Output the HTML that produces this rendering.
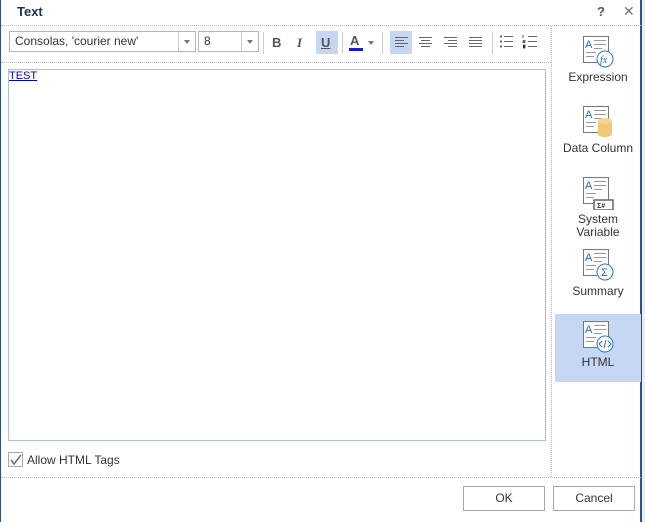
<!DOCTYPE html>
<html><head><style>
body{margin:0;width:645px;height:522px;overflow:hidden;background:#e9edf2;font-family:"Liberation Sans",sans-serif;font-size:12px;color:#333;position:relative}
.dlg{position:absolute;left:0;top:0;width:642px;height:522px;background:#fff;border-left:1px solid #2b4f8f;border-right:2px solid #2b4f8f;box-sizing:border-box}
.a{position:absolute}
.title{left:16px;top:4px;font-weight:bold;font-size:13px;color:#1e3261}
.dot{border-top:1px dotted #b8b8b8}
.vdot{border-left:1px dotted #b8b8b8}
.combo{border:1px solid #b5b5b5;height:21px;box-sizing:border-box;background:#fff;font-size:12px;line-height:19px;padding-left:5px;color:#333}
.combo .arr{position:absolute;right:0;top:0;width:16px;height:19px;border-left:1px solid #ccc}
.combo .arr:after{content:"";position:absolute;left:5px;top:8px;border:3px solid transparent;border-top:4px solid #777}
.sep{width:1px;height:22px;background:#ccc;top:32px}
.hl{background:#c5d7f2}
.btn{border:1px solid #a8a8a8;height:25px;box-sizing:border-box;text-align:center;line-height:23px;font-size:12px;color:#333}
.lab{width:86px;text-align:center;left:554px;font-size:12px;color:#333;line-height:13px}
</style></head><body>
<div class="dlg">
<div class="a title">Text</div>
<div class="a" style="left:596px;top:4px;font-weight:bold;font-size:13px;color:#555">?</div>
<div class="a" style="left:622px;top:3px;font-size:14px;color:#777">✕</div>
<div class="a dot" style="left:0;top:25px;width:640px"></div>
<div class="a vdot" style="left:550px;top:26px;height:451px"></div>
<div class="a combo" style="left:8px;top:31px;width:187px">Consolas, 'courier new'<div class="arr"></div></div>
<div class="a combo" style="left:197px;top:31px;width:61px">8<div class="arr"></div></div>
<div class="a sep" style="left:262px"></div>
<div class="a" style="left:271px;top:35px;font-weight:bold;font-size:13px;color:#555">B</div>
<div class="a" style="left:296px;top:35px;font-style:italic;font-weight:bold;font-size:13px;color:#555;font-family:'Liberation Serif',serif">I</div>
<div class="a hl" style="left:315px;top:31px;width:22px;height:23px"></div>
<div class="a" style="left:320px;top:35px;font-weight:bold;font-size:13px;color:#555;text-decoration:underline">U</div>
<div class="a sep" style="left:341px"></div>
<div class="a" style="left:349px;top:33px;font-weight:bold;font-size:13px;color:#555">A</div>
<div class="a" style="left:348px;top:48px;width:14px;height:3px;background:#1a1acc"></div>
<div class="a" style="left:367px;top:41px;border:3px solid transparent;border-top:4px solid #777"></div>
<div class="a sep" style="left:381px"></div>
<div class="a hl" style="left:389px;top:31px;width:22px;height:23px"></div>
<svg class="a" style="left:392px;top:35px" width="100" height="16" stroke="#666" stroke-width="1">
<path d="M2 2.5h13M2 5.5h9M2 8.5h13M2 11.5h9"/>
<path d="M26 2.5h13M28 5.5h9M26 8.5h13M28 11.5h9"/>
<path d="M51 2.5h13M55 5.5h9M51 8.5h13M55 11.5h9"/>
<path d="M76 2.5h13M76 5.5h13M76 8.5h13M76 11.5h13"/>
</svg>
<div class="a sep" style="left:491px"></div>
<svg class="a" style="left:498px;top:34px" width="45" height="16" stroke="#666" stroke-width="1">
<path d="M1 2.5h2M1 7.5h2M1 12.5h2" stroke-width="2"/>
<path d="M5 2.5h9M5 7.5h9M5 12.5h9"/>
<path d="M24 1v3M24 6.5h2v1h-2v1h2M24 11h2v3h-2" stroke-width="1"/>
<path d="M29 2.5h9M29 7.5h9M29 12.5h9"/>
</svg>
<div class="a dot" style="left:0;top:62px;width:550px"></div>
<div class="a" style="left:7px;top:69px;width:538px;height:372px;border:1px solid #a8c0e0;box-sizing:border-box"></div>
<div class="a" style="left:8px;top:70px;font-size:11px;color:#0000cc;text-decoration:underline">TEST</div>
<div class="a" style="left:7px;top:452px;width:15px;height:15px;border:1px solid #aaa;box-sizing:border-box"></div>
<svg class="a" style="left:8px;top:453px" width="14" height="14"><path d="M2 7l3 4 7-9" stroke="#777" stroke-width="1.6" fill="none"/></svg>
<div class="a" style="left:26px;top:453px;font-size:12px">Allow HTML Tags</div>
<div class="a dot" style="left:0;top:477px;width:640px"></div>
<div class="a btn" style="left:462px;top:486px;width:82px">OK</div>
<div class="a btn" style="left:552px;top:486px;width:82px">Cancel</div>

<div class="a hl" style="left:554px;top:314px;width:86px;height:68px"></div>

<svg class="a" style="left:580px;top:35px" width="34" height="34"><rect x="2.5" y="1.5" width="25" height="26" fill="#fff" stroke="#777"/><text x="4" y="13" font-family="Liberation Sans" font-size="11" fill="#2a6ab8">A</text><path d="M13 5.5h12M13 9.5h12M13 13.5h8M5 17.5h10M5 21.5h8" stroke="#999"/><circle cx="24" cy="24" r="8" fill="#fff" stroke="#2a7ac8"/><text x="19" y="28" font-family="Liberation Serif" font-style="italic" font-size="10" fill="#2a6ab8">fx</text></svg>
<div class="a lab" style="top:71px">Expression</div>

<svg class="a" style="left:580px;top:105px" width="34" height="34"><rect x="2.5" y="1.5" width="25" height="26" fill="#fff" stroke="#777"/><text x="4" y="13" font-family="Liberation Sans" font-size="11" fill="#2a6ab8">A</text><path d="M13 5.5h12M13 9.5h12M13 13.5h8M5 17.5h10M5 21.5h8" stroke="#999"/><path d="M17 16v13a7 3 0 0 0 14 0v-13z" fill="#f0c878"/><ellipse cx="24" cy="16" rx="7" ry="3" fill="#f5d58e"/></svg>
<div class="a lab" style="top:142px">Data Column</div>

<svg class="a" style="left:580px;top:176px" width="34" height="34"><rect x="2.5" y="1.5" width="25" height="26" fill="#fff" stroke="#777"/><text x="4" y="13" font-family="Liberation Sans" font-size="11" fill="#2a6ab8">A</text><path d="M13 5.5h12M13 9.5h12M13 13.5h8M5 17.5h10M5 21.5h8" stroke="#999"/><rect x="13" y="24" width="19" height="10" fill="#fff" stroke="#666" stroke-width="1.5"/><text x="16" y="32" font-family="Liberation Sans" font-weight="bold" font-size="7" fill="#333">Σ#</text></svg>
<div class="a lab" style="top:213px">System<br>Variable</div>

<svg class="a" style="left:580px;top:248px" width="34" height="34"><rect x="2.5" y="1.5" width="25" height="26" fill="#fff" stroke="#777"/><text x="4" y="13" font-family="Liberation Sans" font-size="11" fill="#2a6ab8">A</text><path d="M13 5.5h12M13 9.5h12M13 13.5h8M5 17.5h10M5 21.5h8" stroke="#999"/><circle cx="24" cy="24" r="8" fill="#fff" stroke="#2a7ac8"/><text x="20" y="28" font-family="Liberation Sans" font-size="11" fill="#2a6ab8">Σ</text></svg>
<div class="a lab" style="top:285px">Summary</div>

<svg class="a" style="left:580px;top:320px" width="34" height="34"><rect x="2.5" y="1.5" width="25" height="26" fill="#fff" stroke="#777"/><text x="4" y="13" font-family="Liberation Sans" font-size="11" fill="#2a6ab8">A</text><path d="M13 5.5h12M13 9.5h12M13 13.5h8M5 17.5h10M5 21.5h8" stroke="#999"/><circle cx="24" cy="24" r="8" fill="#fff" stroke="#2a7ac8"/><path d="M21 21l-3 3 3 3M27 21l3 3-3 3M25 20l-2 8" stroke="#2a6ab8" fill="none"/></svg>
<div class="a lab" style="top:356px">HTML</div>
</div>
</body></html>
